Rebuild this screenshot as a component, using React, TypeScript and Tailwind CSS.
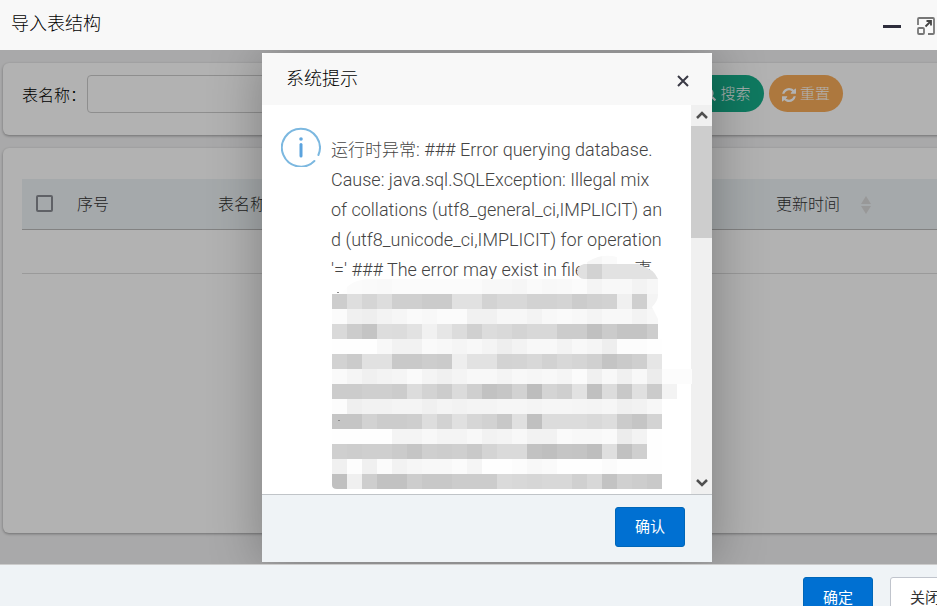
import { FaSearch } from "react-icons/fa";

const CELL = 15;

// One entry per mosaic row: two hex digits of grey per cell, ".." leaves a cell empty.
const MOSAIC = [
  ".. .. .. .. .. .. .. .. .. .. .. .. .. .. .. .. .. f6 fa .. .. .. .. ..",
  ".. .. .. .. .. .. .. .. .. .. .. .. .. .. .. .. e0 d2 e2 e2 e2 e2 .. ..",
  "fe fb fa f9 fb fb fb fb fb fb f8 f8 f6 fa f8 f9 fb f4 f8 f8 f3 f7 .. ..",
  "cd de d5 dd cf cf cb cb e1 e1 d3 d8 d8 d2 d2 d4 cc d0 d2 f0 cf f4 .. ..",
  "fb f0 ee f3 f6 fa f8 fb fb f1 f1 f7 f7 f3 f8 fa f8 f4 f8 f8 f3 f7 .. ..",
  "d9 cc c4 dd dc e2 f1 e6 dc d0 dc d9 d4 d8 d8 cc cc c0 cb c4 c4 cd .. ..",
  "fe fe fe f8 f2 f2 fa f8 f5 f8 f4 ee f3 f8 f8 f3 f8 f5 ee fc fc fe .. ..",
  "d2 cb e1 e1 c9 c9 cd cb ee e2 e2 d3 d4 d8 d2 d8 d5 d0 c4 ca cf e6 .. ..",
  "fa f5 f0 f3 f5 fa f4 f0 f4 f8 f8 f4 f8 f6 f8 f5 fb f0 f8 f0 f8 ec fc fc",
  "cc cc cf cf cc dc d3 cc db cf c2 c6 d2 bd d4 cf e2 c0 dc c8 e0 cb f3 ..",
  "fc ef f2 f2 f4 f4 f0 f4 f2 f4 f4 f6 f6 f4 f6 f6 f5 f4 f6 f0 f2 f7 .. ..",
  "c5 c5 d2 cc cc ce dd d2 e0 d6 d2 c8 e0 c0 dc dc dc d9 dd cb c5 d3 .. ..",
  "fe fe fe fe f4 f4 f8 f4 f4 f8 f2 f4 f8 f2 f2 fa f8 f8 fa ec f3 fe .. ..",
  "cf cd cf cf cb c5 cf cd cf c9 d4 da da c2 bf c5 c4 be df c1 cf fe .. ..",
  "f0 fd f0 fb f2 f6 f8 f8 fb f5 fe fe fc f8 fa fe fe fe fb fe fe fe .. ..",
  "c0 f0 ce c2 c2 cd c8 c8 cc cc cc da d8 d6 d8 d8 d0 d8 c3 d0 cd c9 .. ..",
].map((row) => row.split(" "));

function Mosaic() {
  return (
    <svg
      className="pointer-events-none absolute left-[70px] top-[144px] h-[240px] w-[360px]"
      viewBox="0 0 360 240"
      shapeRendering="crispEdges"
      aria-hidden="true"
    >
      <defs>
        <clipPath id="brush">
          <path d="M252 15Q245 17 245 23Q246 30 252 30H35Q16 32 10 45H0V236Q0 240 5 240H330V150H360V120H330V90H326V70Q322 62 320 58Q326 52 326 46V30Q322 20 308 16V15H285L285 8Q270 4 257 12Z" />
        </clipPath>
      </defs>
      <g clipPath="url(#brush)">
        {MOSAIC.map((row, r) =>
          row.map((g, c) =>
            g === ".." ? null : (
              <rect key={`${r}-${c}`} x={c * CELL} y={r * CELL} width={CELL} height={CELL} fill={`#${g}${g}${g}`} />
            ),
          ),
        )}
      </g>
      <path d="M5 43h2v1h-2zM6 171h2v1h-2z" fill="#888" />
    </svg>
  );
}

function RefreshIcon() {
  return (
    <svg className="size-[14px]" viewBox="0 0 1536 1536" fill="currentColor" aria-hidden="true">
      <path d="M1511 928q0 5-1 7-64 268-268 434.5t-478 166.5q-146 0-282.5-55t-243.5-157l-129 129q-19 19-45 19t-45-19-19-45v-448q0-26 19-45t45-19h448q26 0 45 19t19 45-19 45l-137 137q71 66 161 102t187 36q134 0 250-65t186-179q11-17 53-117 8-23 30-23h192q13 0 22.5 9.5t9.5 22.5zm25-800v448q0 26-19 45t-45 19h-448q-26 0-45-19t-19-45 19-45l138-138q-148-137-349-137-134 0-250 65t-186 179q-11 17-53 117-8 23-30 23h-199q-13 0-22.5-9.5t-9.5-22.5v-7q65-268 270-434.5t480-166.5q146 0 284 55.5t245 156.5l130-129q19-19 45-19t45 19 19 45z" />
    </svg>
  );
}

function MaximizeIcon() {
  return (
    <svg className="size-[18px]" viewBox="0 0 18 18" fill="none" stroke="#777" strokeWidth="1.8" aria-hidden="true">
      <path d="M1 8V2Q1 1 2 1H16Q17 1 17 2V16Q17 17 16 17H11" />
      <rect x="1" y="11" width="6" height="6" rx="1" />
      <path d="M8.500 9.500L14 4M9.500 4H14V8.500" stroke="#444" />
    </svg>
  );
}

function InfoIcon() {
  return (
    <svg className="size-10 shrink-0" viewBox="0 0 40 40" fill="none" aria-hidden="true">
      <path d="M33.400 34A19 19 0 1 1 37.400 28" stroke="#7cb8e0" strokeWidth="2" strokeLinecap="round" />
      <circle cx="20" cy="12" r="1.800" fill="#64a9e0" />
      <path d="M20 17.500V29" stroke="#5ba3de" strokeWidth="3" strokeLinecap="round" />
    </svg>
  );
}

function Chevron({ down = false }: { down?: boolean }) {
  return (
    <svg className="h-2 w-3" viewBox="0 0 12 8" fill="none" stroke="#505050" strokeWidth="2.500" aria-hidden="true">
      <path d={down ? "M1 1L6 6L11 1" : "M1 7L6 2L11 7"} />
    </svg>
  );
}

function SystemDialog() {
  return (
    <section
      role="dialog"
      aria-labelledby="dialog-title"
      className="relative w-[450px] bg-white shadow-[1px_1px_50px_rgba(0,0,0,0.3)]"
    >
      <header className="flex h-[52px] items-center justify-between rounded-t-sm bg-[#f8f8f8] pl-6 pr-[22px]">
        <h2 id="dialog-title" className="text-lg font-light text-black">系统提示</h2>
        <button type="button" aria-label="关闭提示" className="mt-1">
          <svg className="size-[14px]" viewBox="0 0 14 14" fill="none" stroke="#3a3a45" strokeWidth="2" aria-hidden="true">
            <path d="M2 2L12 12M12 2L2 12" />
          </svg>
        </button>
      </header>
      <div className="relative flex h-[389px] overflow-hidden">
        <div className="flex flex-1 items-start gap-[10px] pl-[19px] pt-[22px]">
          <InfoIcon />
          <p className="mt-2 w-[334px] whitespace-nowrap font-['Roboto','Noto_Sans_CJK_SC',sans-serif] text-lg leading-[30px] font-light text-[#444]">
            <span className="text-[17px]">运行时异常</span>: ### Error querying database.
            <br />
            Cause: java.sql.SQLException: Illegal mix
            <br />
            of collations (utf8_general_ci,IMPLICIT) an
            <br />
            d (utf8_unicode_ci,IMPLICIT) for operation
            <br />
            &apos;=&apos; ### The error may exist in file
            <span className="ml-[50px]">事</span>
          </p>
        </div>
        <div className="flex w-[21px] flex-col bg-[#f0f0f0]">
          <button type="button" aria-label="向上滚动" className="flex h-[21px] items-center justify-center">
            <Chevron />
          </button>
          <div className="h-28 bg-[#cdcdcd]" />
          <button type="button" aria-label="向下滚动" className="mt-auto flex h-[21px] items-center justify-center">
            <Chevron down />
          </button>
        </div>
        <Mosaic />
      </div>
      <footer className="flex justify-end border-t border-[#c0c4c8] bg-[#eff3f6] pb-[15px] pr-[27px] pt-3">
        <button type="button" className="h-10 w-[70px] rounded-[3px] border border-[#0066b8] bg-[#0070d2] pt-[2px] text-[15px] text-white">
          确认
        </button>
      </footer>
    </section>
  );
}

export default function App() {
  return (
    <div className="h-screen overflow-hidden font-['Liberation_Sans','Noto_Sans_CJK_SC',sans-serif]">
      <div className="min-w-[974px] bg-[#f8f8f8]">
        <header className="flex h-[50px] items-center justify-between pl-[11px] pr-[39px]">
          <h1 className="pb-[2px] text-lg font-light text-black">导入表结构</h1>
          <div className="flex items-center gap-4 pt-[2px]">
            <button type="button" aria-label="最小化" className="flex h-[18px] w-[18px] items-center">
              <span className="h-[3px] w-full bg-[#2e2d3c]" />
            </button>
            <button type="button" aria-label="最大化">
              <MaximizeIcon />
            </button>
          </div>
        </header>

        <main className="relative overflow-hidden bg-[#f3f3f4] px-[3px] pb-[31px] pt-[13px]">
          <form className="flex h-[72px] items-start rounded-md bg-white pl-[19px] pt-3 shadow-[0_1px_3px_rgba(0,0,0,0.35)]">
            <label htmlFor="table-name" className="w-[65px] pt-[2px] text-base font-light leading-[38px] text-black">
              表名称：
            </label>
            <input id="table-name" className="h-[38px] w-[585px] rounded border border-[#ccc] bg-white px-2" />
            <button
              type="button"
              className="ml-[18px] flex h-[37px] w-[74px] items-center justify-center gap-1 rounded-full bg-[#16ae8a] pt-[2px] text-[15px] font-light text-white"
            >
              <FaSearch className="size-[13px]" />
              搜索
            </button>
            <button
              type="button"
              className="ml-[5px] flex h-[37px] w-[74px] items-center justify-center gap-1 rounded-full bg-[#f8ac59] pt-[2px] text-[15px] font-light text-white"
            >
              <RefreshIcon />
              重置
            </button>
          </form>

          <div className="mt-[13px] h-[385px] rounded-md bg-white px-[19px] pt-[31px] shadow-[0_1px_3px_rgba(0,0,0,0.35)]">
            <table className="w-full table-fixed border-collapse text-left text-base text-[#333]">
              <thead>
                <tr className="h-[50px] border-b border-[#bbb] bg-[#edf2f5]">
                  <th className="w-[47px] pl-[14px]">
                    <input
                      type="checkbox"
                      aria-label="全选"
                      className="block size-[17px] appearance-none rounded-xs border-2 border-[#888c92]"
                    />
                  </th>
                  <th className="w-[141px] pl-2 pt-[2px] font-light">序号</th>
                  <th className="w-[558px] pl-2 pt-[2px] font-light">表名称</th>
                  <th className="pl-2 pt-[2px] font-light">
                    <div className="flex items-center gap-5">
                      更新时间
                      <svg className="h-[18px] w-3" viewBox="0 0 12 18" fill="#dadada" aria-hidden="true">
                        <path d="M6 0L11 8H1ZM6 18L11 10H1Z" />
                      </svg>
                    </div>
                  </th>
                </tr>
              </thead>
              <tbody>
                <tr className="h-[44px] border-b border-[#ddd]">
                  <td colSpan={4} />
                </tr>
              </tbody>
            </table>
          </div>

          <div className="absolute inset-0 flex items-center justify-center bg-black/30">
            <SystemDialog />
          </div>
        </main>

        <footer className="flex justify-end gap-[17px] border-t border-[#ccc] bg-[#eff3f6] pb-3 pr-[14px] pt-3">
          <button type="button" className="h-10 w-[70px] rounded-[3px] border border-[#0066b8] bg-[#0070d2] pt-[2px] text-[15px] text-white">
            确定
          </button>
          <button type="button" className="h-10 w-[70px] rounded-[3px] border border-[#c0c4cc] bg-white pt-[2px] text-[15px] text-[#333]">
            关闭
          </button>
        </footer>
      </div>
    </div>
  );
}
